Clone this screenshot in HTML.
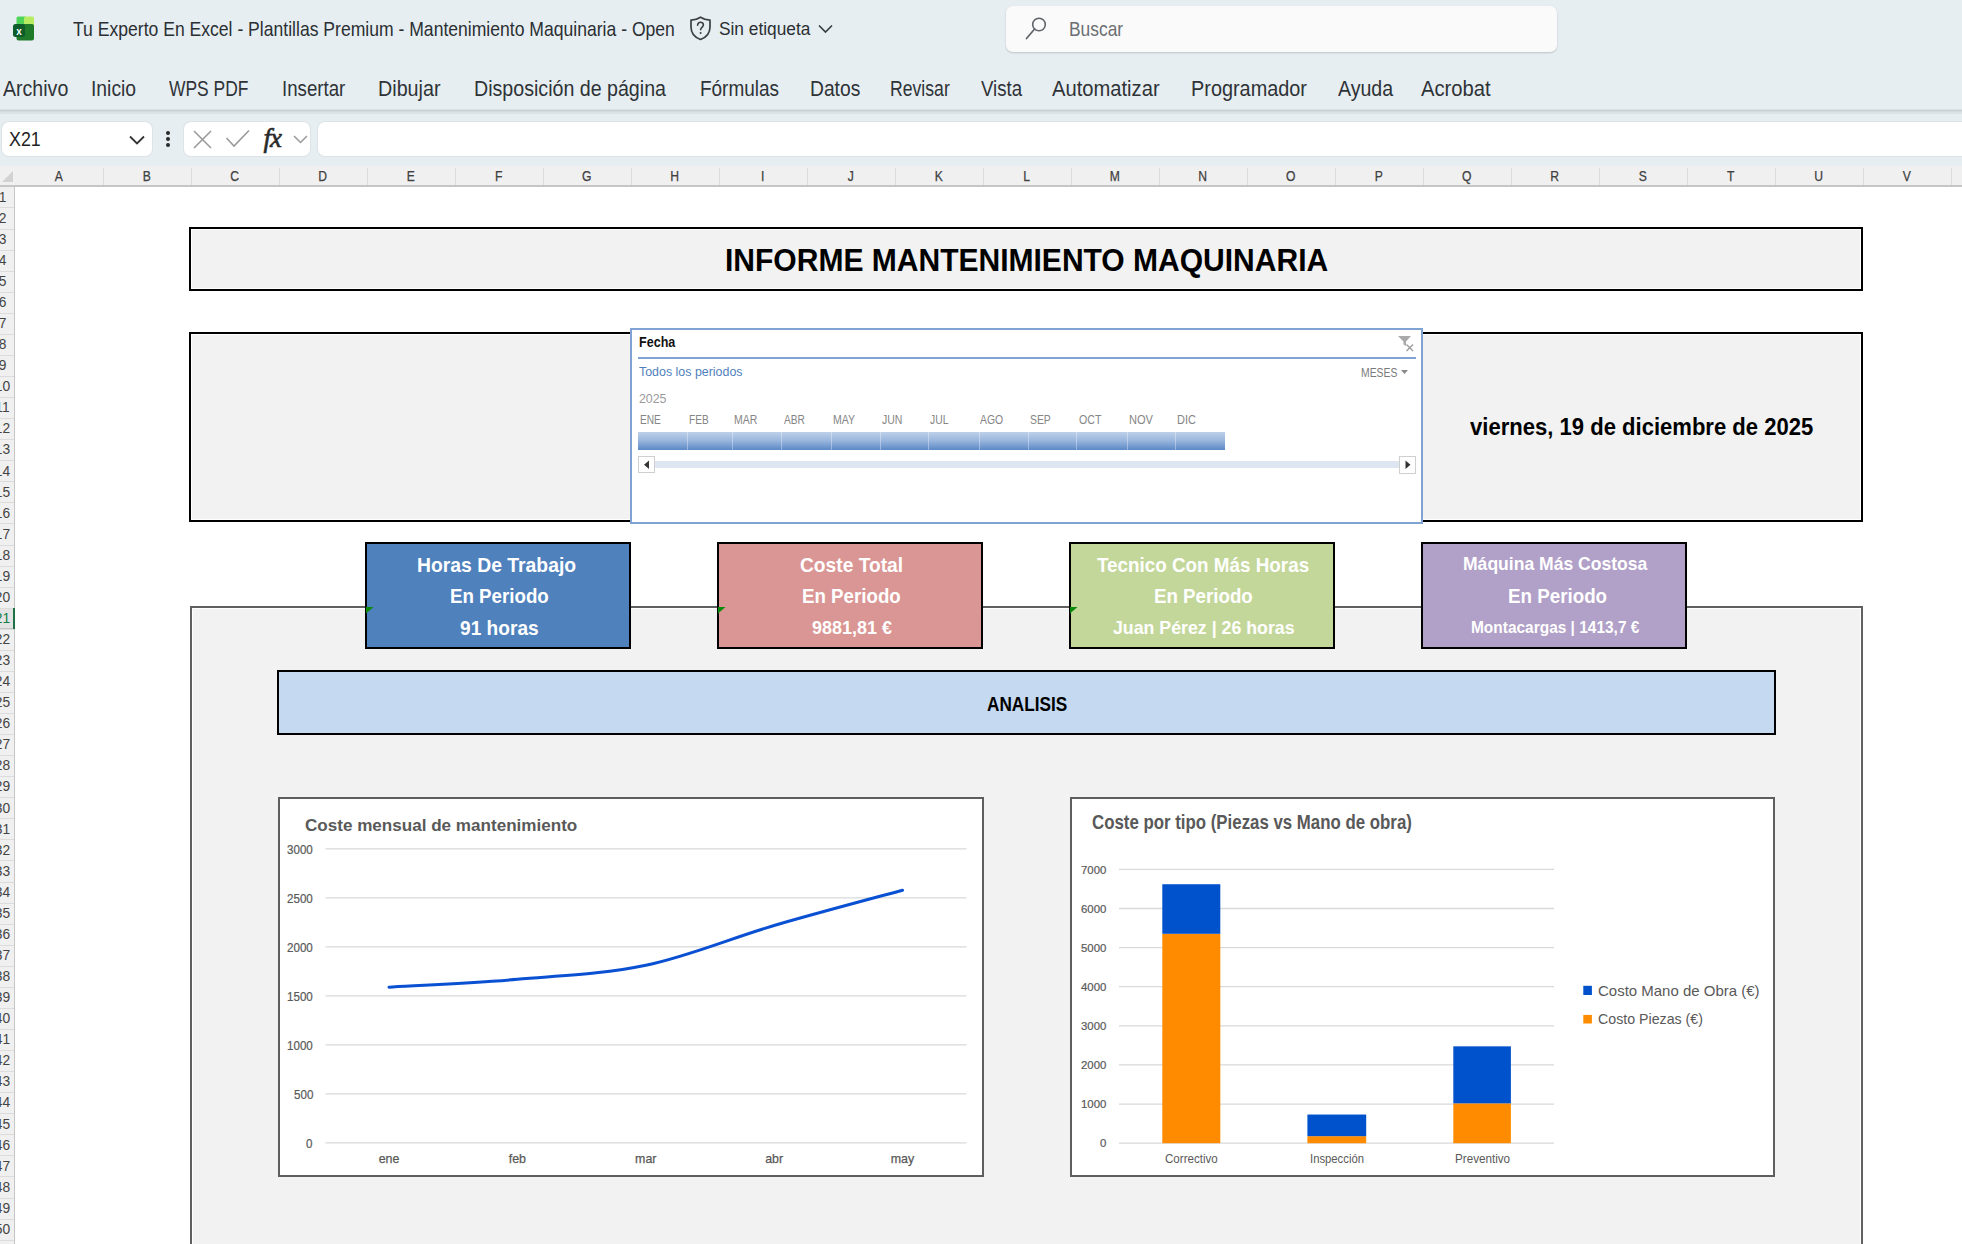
<!DOCTYPE html>
<html><head><meta charset="utf-8">
<style>
*{box-sizing:border-box;margin:0;padding:0}
html,body{width:1962px;height:1244px;overflow:hidden;background:#fff;font-family:"Liberation Sans",sans-serif;position:relative}
.a{position:absolute}
.t{position:absolute;white-space:nowrap;line-height:1;transform-origin:0 0}
</style></head><body>

<div class="a" style="left:0px;top:0px;width:1962px;height:166px;background:#e6eef1;"></div>
<div class="a" style="left:0px;top:109px;width:1962px;height:1px;background:#dae1e4;"></div>
<div class="a" style="left:0px;top:110px;width:1962px;height:1px;background:#c9d1d4;"></div>
<div class="a" style="left:0px;top:111px;width:1962px;height:1px;background:#d3dadd;"></div>
<div class="a" style="left:0px;top:112px;width:1962px;height:2px;background:#dce3e6;"></div>
<svg class="a" style="left:13px;top:16px" width="24" height="25" viewBox="0 0 24 25">
<rect x="3.5" y="0.5" width="10" height="9" rx="1.5" fill="#4fd35a"/>
<rect x="11" y="0.5" width="10" height="9" rx="1.5" fill="#b7ec63"/>
<rect x="11" y="3" width="10" height="6.5" fill="#b7ec63"/>
<rect x="3.5" y="8" width="17.5" height="16.5" rx="2" fill="#1f7a2a"/>
<rect x="0" y="8" width="12" height="13" rx="2.5" fill="#0e5c2a"/>
<text x="6" y="18.5" font-family="Liberation Sans" font-weight="bold" font-size="10" fill="#fff" text-anchor="middle">x</text>
</svg>
<div class="t" style="left:73.40px;top:19.90px;font-size:19.48px;font-weight:normal;color:#2b2f33;transform:scaleX(0.9025);">Tu Experto En Excel - Plantillas Premium - Mantenimiento Maquinaria - Open</div>
<svg class="a" style="left:689px;top:16px" width="23" height="25" viewBox="0 0 23 25">
<path d="M11.5 1.2 C8.5 3.2 5.5 4 2 4.2 V11 C2 17 6 21.5 11.5 23.5 C17 21.5 21 17 21 11 V4.2 C17.5 4 14.5 3.2 11.5 1.2 Z" fill="none" stroke="#3b3f44" stroke-width="1.7" stroke-linejoin="round"/>
<path d="M8.6 9.2 C8.6 7.4 9.9 6.3 11.5 6.3 C13.1 6.3 14.4 7.4 14.4 9 C14.4 11 11.6 11.3 11.6 13.8" fill="none" stroke="#3b3f44" stroke-width="1.6" stroke-linecap="round"/>
<circle cx="11.6" cy="17" r="1" fill="#3b3f44"/>
</svg>
<div class="t" style="left:719.00px;top:21.17px;font-size:17.51px;font-weight:normal;color:#2b2f33;transform:scaleX(0.9878);">Sin etiqueta</div>
<svg class="a" style="left:817px;top:23px" width="17" height="11" viewBox="0 0 17 11"><path d="M2 2.5 L8.5 9 L15 2.5" fill="none" stroke="#3b3f44" stroke-width="1.7"/></svg>
<div class="a" style="left:1006px;top:6px;width:551px;height:46px;background:#fafafa;border-radius:7px;box-shadow:0 1px 2px rgba(0,0,0,0.18);"></div>
<svg class="a" style="left:1024px;top:15px" width="26" height="26" viewBox="0 0 26 26">
<circle cx="15" cy="9.5" r="6.3" fill="none" stroke="#5f6368" stroke-width="1.6"/>
<path d="M10.6 14 L2.5 23.5" stroke="#5f6368" stroke-width="1.7" stroke-linecap="round"/></svg>
<div class="t" style="left:1068.60px;top:19.90px;font-size:19.48px;font-weight:normal;color:#6b6f73;transform:scaleX(0.8926);">Buscar</div>
<div class="t" style="left:2.90px;top:77.53px;font-size:21.22px;font-weight:normal;color:#2f3337;transform:scaleX(0.9227);">Archivo</div>
<div class="t" style="left:91.40px;top:77.53px;font-size:21.22px;font-weight:normal;color:#2f3337;transform:scaleX(0.9106);">Inicio</div>
<div class="t" style="left:169.00px;top:77.53px;font-size:21.22px;font-weight:normal;color:#2f3337;transform:scaleX(0.8223);">WPS PDF</div>
<div class="t" style="left:282.00px;top:77.53px;font-size:21.22px;font-weight:normal;color:#2f3337;transform:scaleX(0.8799);">Insertar</div>
<div class="t" style="left:377.80px;top:77.53px;font-size:21.22px;font-weight:normal;color:#2f3337;transform:scaleX(0.9297);">Dibujar</div>
<div class="t" style="left:474.00px;top:77.53px;font-size:21.22px;font-weight:normal;color:#2f3337;transform:scaleX(0.9246);">Disposición de página</div>
<div class="t" style="left:699.90px;top:77.53px;font-size:21.22px;font-weight:normal;color:#2f3337;transform:scaleX(0.8932);">Fórmulas</div>
<div class="t" style="left:810.20px;top:77.53px;font-size:21.22px;font-weight:normal;color:#2f3337;transform:scaleX(0.9075);">Datos</div>
<div class="t" style="left:889.80px;top:77.53px;font-size:21.22px;font-weight:normal;color:#2f3337;transform:scaleX(0.8313);">Revisar</div>
<div class="t" style="left:980.80px;top:77.53px;font-size:21.22px;font-weight:normal;color:#2f3337;transform:scaleX(0.8801);">Vista</div>
<div class="t" style="left:1052.40px;top:77.53px;font-size:21.22px;font-weight:normal;color:#2f3337;transform:scaleX(0.9504);">Automatizar</div>
<div class="t" style="left:1190.70px;top:77.53px;font-size:21.22px;font-weight:normal;color:#2f3337;transform:scaleX(0.9367);">Programador</div>
<div class="t" style="left:1337.50px;top:77.53px;font-size:21.22px;font-weight:normal;color:#2f3337;transform:scaleX(0.9214);">Ayuda</div>
<div class="t" style="left:1421.20px;top:77.53px;font-size:21.22px;font-weight:normal;color:#2f3337;transform:scaleX(0.9531);">Acrobat</div>
<div class="a" style="left:2px;top:122px;width:150px;height:34px;background:#fff;border-radius:7px;box-shadow:0 0 0 1px #dde3e6;"></div>
<div class="t" style="left:8.60px;top:129.29px;font-size:20.20px;font-weight:normal;color:#1f1f1f;transform:scaleX(0.8848);">X21</div>
<svg class="a" style="left:128px;top:134px" width="18" height="12" viewBox="0 0 18 12"><path d="M2 2.5 L9 9.5 L16 2.5" fill="none" stroke="#333" stroke-width="1.8"/></svg>
<div class="a" style="left:166.2px;top:131px;width:4px;height:4px;border-radius:2px;background:#2a2a2a"></div>
<div class="a" style="left:166.2px;top:137px;width:4px;height:4px;border-radius:2px;background:#2a2a2a"></div>
<div class="a" style="left:166.2px;top:143px;width:4px;height:4px;border-radius:2px;background:#2a2a2a"></div>
<div class="a" style="left:184px;top:122px;width:126px;height:34px;background:#fff;border-radius:7px;box-shadow:0 0 0 1px #dde3e6;"></div>
<svg class="a" style="left:190px;top:127px" width="120" height="26" viewBox="0 0 120 26">
<path d="M4 4 L21 21 M21 4 L4 21" stroke="#9a9a9a" stroke-width="1.6"/>
<path d="M36.5 11 L44 19 L59 3.5" fill="none" stroke="#9a9a9a" stroke-width="1.6"/>
<path d="M104 9 L110.5 15.5 L117 9" fill="none" stroke="#999" stroke-width="1.5"/>
</svg>
<div class="t" style="left:263.5px;top:124.5px;font-family:'Liberation Serif';font-style:italic;font-size:27px;color:#2a2a2a;letter-spacing:-1px;-webkit-text-stroke:0.6px #2a2a2a">fx</div>
<div class="a" style="left:318px;top:122px;width:1644px;height:34px;background:#fff;border-radius:7px 0 0 7px;box-shadow:0 0 0 1px #dde3e6;"></div>
<div class="a" style="left:0px;top:166px;width:1962px;height:20px;background:#f0f0f0;"></div>
<div class="a" style="left:0px;top:185px;width:1962px;height:2px;background:#c6c6c6;"></div>
<div class="t" style="left:20px;top:170.2px;width:88px;text-align:center;font-size:13.8px;color:#404040;transform:scaleX(0.88);-webkit-text-stroke:0.25px #404040">A</div>
<div class="a" style="left:103px;top:168px;width:1px;height:17px;background:#dcdcdc;"></div>
<div class="t" style="left:108px;top:170.2px;width:88px;text-align:center;font-size:13.8px;color:#404040;transform:scaleX(0.88);-webkit-text-stroke:0.25px #404040">B</div>
<div class="a" style="left:191px;top:168px;width:1px;height:17px;background:#dcdcdc;"></div>
<div class="t" style="left:196px;top:170.2px;width:88px;text-align:center;font-size:13.8px;color:#404040;transform:scaleX(0.88);-webkit-text-stroke:0.25px #404040">C</div>
<div class="a" style="left:279px;top:168px;width:1px;height:17px;background:#dcdcdc;"></div>
<div class="t" style="left:284px;top:170.2px;width:88px;text-align:center;font-size:13.8px;color:#404040;transform:scaleX(0.88);-webkit-text-stroke:0.25px #404040">D</div>
<div class="a" style="left:367px;top:168px;width:1px;height:17px;background:#dcdcdc;"></div>
<div class="t" style="left:372px;top:170.2px;width:88px;text-align:center;font-size:13.8px;color:#404040;transform:scaleX(0.88);-webkit-text-stroke:0.25px #404040">E</div>
<div class="a" style="left:455px;top:168px;width:1px;height:17px;background:#dcdcdc;"></div>
<div class="t" style="left:460px;top:170.2px;width:88px;text-align:center;font-size:13.8px;color:#404040;transform:scaleX(0.88);-webkit-text-stroke:0.25px #404040">F</div>
<div class="a" style="left:543px;top:168px;width:1px;height:17px;background:#dcdcdc;"></div>
<div class="t" style="left:548px;top:170.2px;width:88px;text-align:center;font-size:13.8px;color:#404040;transform:scaleX(0.88);-webkit-text-stroke:0.25px #404040">G</div>
<div class="a" style="left:631px;top:168px;width:1px;height:17px;background:#dcdcdc;"></div>
<div class="t" style="left:636px;top:170.2px;width:88px;text-align:center;font-size:13.8px;color:#404040;transform:scaleX(0.88);-webkit-text-stroke:0.25px #404040">H</div>
<div class="a" style="left:719px;top:168px;width:1px;height:17px;background:#dcdcdc;"></div>
<div class="t" style="left:724px;top:170.2px;width:88px;text-align:center;font-size:13.8px;color:#404040;transform:scaleX(0.88);-webkit-text-stroke:0.25px #404040">I</div>
<div class="a" style="left:807px;top:168px;width:1px;height:17px;background:#dcdcdc;"></div>
<div class="t" style="left:812px;top:170.2px;width:88px;text-align:center;font-size:13.8px;color:#404040;transform:scaleX(0.88);-webkit-text-stroke:0.25px #404040">J</div>
<div class="a" style="left:895px;top:168px;width:1px;height:17px;background:#dcdcdc;"></div>
<div class="t" style="left:900px;top:170.2px;width:88px;text-align:center;font-size:13.8px;color:#404040;transform:scaleX(0.88);-webkit-text-stroke:0.25px #404040">K</div>
<div class="a" style="left:983px;top:168px;width:1px;height:17px;background:#dcdcdc;"></div>
<div class="t" style="left:988px;top:170.2px;width:88px;text-align:center;font-size:13.8px;color:#404040;transform:scaleX(0.88);-webkit-text-stroke:0.25px #404040">L</div>
<div class="a" style="left:1071px;top:168px;width:1px;height:17px;background:#dcdcdc;"></div>
<div class="t" style="left:1076px;top:170.2px;width:88px;text-align:center;font-size:13.8px;color:#404040;transform:scaleX(0.88);-webkit-text-stroke:0.25px #404040">M</div>
<div class="a" style="left:1159px;top:168px;width:1px;height:17px;background:#dcdcdc;"></div>
<div class="t" style="left:1164px;top:170.2px;width:88px;text-align:center;font-size:13.8px;color:#404040;transform:scaleX(0.88);-webkit-text-stroke:0.25px #404040">N</div>
<div class="a" style="left:1247px;top:168px;width:1px;height:17px;background:#dcdcdc;"></div>
<div class="t" style="left:1252px;top:170.2px;width:88px;text-align:center;font-size:13.8px;color:#404040;transform:scaleX(0.88);-webkit-text-stroke:0.25px #404040">O</div>
<div class="a" style="left:1335px;top:168px;width:1px;height:17px;background:#dcdcdc;"></div>
<div class="t" style="left:1340px;top:170.2px;width:88px;text-align:center;font-size:13.8px;color:#404040;transform:scaleX(0.88);-webkit-text-stroke:0.25px #404040">P</div>
<div class="a" style="left:1423px;top:168px;width:1px;height:17px;background:#dcdcdc;"></div>
<div class="t" style="left:1428px;top:170.2px;width:88px;text-align:center;font-size:13.8px;color:#404040;transform:scaleX(0.88);-webkit-text-stroke:0.25px #404040">Q</div>
<div class="a" style="left:1511px;top:168px;width:1px;height:17px;background:#dcdcdc;"></div>
<div class="t" style="left:1516px;top:170.2px;width:88px;text-align:center;font-size:13.8px;color:#404040;transform:scaleX(0.88);-webkit-text-stroke:0.25px #404040">R</div>
<div class="a" style="left:1599px;top:168px;width:1px;height:17px;background:#dcdcdc;"></div>
<div class="t" style="left:1604px;top:170.2px;width:88px;text-align:center;font-size:13.8px;color:#404040;transform:scaleX(0.88);-webkit-text-stroke:0.25px #404040">S</div>
<div class="a" style="left:1687px;top:168px;width:1px;height:17px;background:#dcdcdc;"></div>
<div class="t" style="left:1692px;top:170.2px;width:88px;text-align:center;font-size:13.8px;color:#404040;transform:scaleX(0.88);-webkit-text-stroke:0.25px #404040">T</div>
<div class="a" style="left:1775px;top:168px;width:1px;height:17px;background:#dcdcdc;"></div>
<div class="t" style="left:1780px;top:170.2px;width:88px;text-align:center;font-size:13.8px;color:#404040;transform:scaleX(0.88);-webkit-text-stroke:0.25px #404040">U</div>
<div class="a" style="left:1863px;top:168px;width:1px;height:17px;background:#dcdcdc;"></div>
<div class="t" style="left:1868px;top:170.2px;width:88px;text-align:center;font-size:13.8px;color:#404040;transform:scaleX(0.88);-webkit-text-stroke:0.25px #404040">V</div>
<div class="a" style="left:1951px;top:168px;width:1px;height:17px;background:#dcdcdc;"></div>
<svg class="a" style="left:2px;top:171px" width="11" height="11"><path d="M11 0 L11 11 L0 11 Z" fill="#d2d2d2"/></svg>
<div class="a" style="left:0px;top:187px;width:14px;height:1057px;background:#f0f0f0;"></div>
<div class="a" style="left:14px;top:187px;width:1px;height:1057px;background:#c6c6c6;"></div>
<div class="a" style="left:0px;top:609px;width:13px;height:20px;background:#e3e3e3;"></div>
<div class="a" style="left:0px;top:628px;width:13px;height:2px;background:#c4c4c4;"></div>
<div class="a" style="left:0px;top:207px;width:14px;height:1px;background:#dcdcdc;"></div>
<div class="t" style="left:-18px;width:41px;text-align:center;top:190.6px;font-size:13.8px;color:#444">1</div>
<div class="a" style="left:0px;top:229px;width:14px;height:1px;background:#dcdcdc;"></div>
<div class="t" style="left:-18px;width:41px;text-align:center;top:211.7px;font-size:13.8px;color:#444">2</div>
<div class="a" style="left:0px;top:250px;width:14px;height:1px;background:#dcdcdc;"></div>
<div class="t" style="left:-18px;width:41px;text-align:center;top:232.7px;font-size:13.8px;color:#444">3</div>
<div class="a" style="left:0px;top:271px;width:14px;height:1px;background:#dcdcdc;"></div>
<div class="t" style="left:-18px;width:41px;text-align:center;top:253.8px;font-size:13.8px;color:#444">4</div>
<div class="a" style="left:0px;top:292px;width:14px;height:1px;background:#dcdcdc;"></div>
<div class="t" style="left:-18px;width:41px;text-align:center;top:274.9px;font-size:13.8px;color:#444">5</div>
<div class="a" style="left:0px;top:313px;width:14px;height:1px;background:#dcdcdc;"></div>
<div class="t" style="left:-18px;width:41px;text-align:center;top:295.9px;font-size:13.8px;color:#444">6</div>
<div class="a" style="left:0px;top:334px;width:14px;height:1px;background:#dcdcdc;"></div>
<div class="t" style="left:-18px;width:41px;text-align:center;top:317.0px;font-size:13.8px;color:#444">7</div>
<div class="a" style="left:0px;top:355px;width:14px;height:1px;background:#dcdcdc;"></div>
<div class="t" style="left:-18px;width:41px;text-align:center;top:338.1px;font-size:13.8px;color:#444">8</div>
<div class="a" style="left:0px;top:376px;width:14px;height:1px;background:#dcdcdc;"></div>
<div class="t" style="left:-18px;width:41px;text-align:center;top:359.1px;font-size:13.8px;color:#444">9</div>
<div class="a" style="left:0px;top:397px;width:14px;height:1px;background:#dcdcdc;"></div>
<div class="t" style="left:-18px;width:41px;text-align:center;top:380.2px;font-size:13.8px;color:#444">10</div>
<div class="a" style="left:0px;top:418px;width:14px;height:1px;background:#dcdcdc;"></div>
<div class="t" style="left:-18px;width:41px;text-align:center;top:401.3px;font-size:13.8px;color:#444">11</div>
<div class="a" style="left:0px;top:439px;width:14px;height:1px;background:#dcdcdc;"></div>
<div class="t" style="left:-18px;width:41px;text-align:center;top:422.3px;font-size:13.8px;color:#444">12</div>
<div class="a" style="left:0px;top:460px;width:14px;height:1px;background:#dcdcdc;"></div>
<div class="t" style="left:-18px;width:41px;text-align:center;top:443.4px;font-size:13.8px;color:#444">13</div>
<div class="a" style="left:0px;top:481px;width:14px;height:1px;background:#dcdcdc;"></div>
<div class="t" style="left:-18px;width:41px;text-align:center;top:464.5px;font-size:13.8px;color:#444">14</div>
<div class="a" style="left:0px;top:502px;width:14px;height:1px;background:#dcdcdc;"></div>
<div class="t" style="left:-18px;width:41px;text-align:center;top:485.5px;font-size:13.8px;color:#444">15</div>
<div class="a" style="left:0px;top:523px;width:14px;height:1px;background:#dcdcdc;"></div>
<div class="t" style="left:-18px;width:41px;text-align:center;top:506.6px;font-size:13.8px;color:#444">16</div>
<div class="a" style="left:0px;top:545px;width:14px;height:1px;background:#dcdcdc;"></div>
<div class="t" style="left:-18px;width:41px;text-align:center;top:527.7px;font-size:13.8px;color:#444">17</div>
<div class="a" style="left:0px;top:566px;width:14px;height:1px;background:#dcdcdc;"></div>
<div class="t" style="left:-18px;width:41px;text-align:center;top:548.7px;font-size:13.8px;color:#444">18</div>
<div class="a" style="left:0px;top:587px;width:14px;height:1px;background:#dcdcdc;"></div>
<div class="t" style="left:-18px;width:41px;text-align:center;top:569.8px;font-size:13.8px;color:#444">19</div>
<div class="a" style="left:0px;top:608px;width:14px;height:1px;background:#dcdcdc;"></div>
<div class="t" style="left:-18px;width:41px;text-align:center;top:590.8px;font-size:13.8px;color:#444">20</div>
<div class="a" style="left:0px;top:629px;width:14px;height:1px;background:#dcdcdc;"></div>
<div class="t" style="left:-18px;width:41px;text-align:center;top:611.9px;font-size:13.8px;color:#107c41">21</div>
<div class="a" style="left:0px;top:650px;width:14px;height:1px;background:#dcdcdc;"></div>
<div class="t" style="left:-18px;width:41px;text-align:center;top:633.0px;font-size:13.8px;color:#444">22</div>
<div class="a" style="left:0px;top:671px;width:14px;height:1px;background:#dcdcdc;"></div>
<div class="t" style="left:-18px;width:41px;text-align:center;top:654.0px;font-size:13.8px;color:#444">23</div>
<div class="a" style="left:0px;top:692px;width:14px;height:1px;background:#dcdcdc;"></div>
<div class="t" style="left:-18px;width:41px;text-align:center;top:675.1px;font-size:13.8px;color:#444">24</div>
<div class="a" style="left:0px;top:713px;width:14px;height:1px;background:#dcdcdc;"></div>
<div class="t" style="left:-18px;width:41px;text-align:center;top:696.2px;font-size:13.8px;color:#444">25</div>
<div class="a" style="left:0px;top:734px;width:14px;height:1px;background:#dcdcdc;"></div>
<div class="t" style="left:-18px;width:41px;text-align:center;top:717.2px;font-size:13.8px;color:#444">26</div>
<div class="a" style="left:0px;top:755px;width:14px;height:1px;background:#dcdcdc;"></div>
<div class="t" style="left:-18px;width:41px;text-align:center;top:738.3px;font-size:13.8px;color:#444">27</div>
<div class="a" style="left:0px;top:776px;width:14px;height:1px;background:#dcdcdc;"></div>
<div class="t" style="left:-18px;width:41px;text-align:center;top:759.4px;font-size:13.8px;color:#444">28</div>
<div class="a" style="left:0px;top:797px;width:14px;height:1px;background:#dcdcdc;"></div>
<div class="t" style="left:-18px;width:41px;text-align:center;top:780.4px;font-size:13.8px;color:#444">29</div>
<div class="a" style="left:0px;top:818px;width:14px;height:1px;background:#dcdcdc;"></div>
<div class="t" style="left:-18px;width:41px;text-align:center;top:801.5px;font-size:13.8px;color:#444">30</div>
<div class="a" style="left:0px;top:839px;width:14px;height:1px;background:#dcdcdc;"></div>
<div class="t" style="left:-18px;width:41px;text-align:center;top:822.6px;font-size:13.8px;color:#444">31</div>
<div class="a" style="left:0px;top:860px;width:14px;height:1px;background:#dcdcdc;"></div>
<div class="t" style="left:-18px;width:41px;text-align:center;top:843.6px;font-size:13.8px;color:#444">32</div>
<div class="a" style="left:0px;top:882px;width:14px;height:1px;background:#dcdcdc;"></div>
<div class="t" style="left:-18px;width:41px;text-align:center;top:864.7px;font-size:13.8px;color:#444">33</div>
<div class="a" style="left:0px;top:903px;width:14px;height:1px;background:#dcdcdc;"></div>
<div class="t" style="left:-18px;width:41px;text-align:center;top:885.8px;font-size:13.8px;color:#444">34</div>
<div class="a" style="left:0px;top:924px;width:14px;height:1px;background:#dcdcdc;"></div>
<div class="t" style="left:-18px;width:41px;text-align:center;top:906.8px;font-size:13.8px;color:#444">35</div>
<div class="a" style="left:0px;top:945px;width:14px;height:1px;background:#dcdcdc;"></div>
<div class="t" style="left:-18px;width:41px;text-align:center;top:927.9px;font-size:13.8px;color:#444">36</div>
<div class="a" style="left:0px;top:966px;width:14px;height:1px;background:#dcdcdc;"></div>
<div class="t" style="left:-18px;width:41px;text-align:center;top:949.0px;font-size:13.8px;color:#444">37</div>
<div class="a" style="left:0px;top:987px;width:14px;height:1px;background:#dcdcdc;"></div>
<div class="t" style="left:-18px;width:41px;text-align:center;top:970.0px;font-size:13.8px;color:#444">38</div>
<div class="a" style="left:0px;top:1008px;width:14px;height:1px;background:#dcdcdc;"></div>
<div class="t" style="left:-18px;width:41px;text-align:center;top:991.1px;font-size:13.8px;color:#444">39</div>
<div class="a" style="left:0px;top:1029px;width:14px;height:1px;background:#dcdcdc;"></div>
<div class="t" style="left:-18px;width:41px;text-align:center;top:1012.1px;font-size:13.8px;color:#444">40</div>
<div class="a" style="left:0px;top:1050px;width:14px;height:1px;background:#dcdcdc;"></div>
<div class="t" style="left:-18px;width:41px;text-align:center;top:1033.2px;font-size:13.8px;color:#444">41</div>
<div class="a" style="left:0px;top:1071px;width:14px;height:1px;background:#dcdcdc;"></div>
<div class="t" style="left:-18px;width:41px;text-align:center;top:1054.3px;font-size:13.8px;color:#444">42</div>
<div class="a" style="left:0px;top:1092px;width:14px;height:1px;background:#dcdcdc;"></div>
<div class="t" style="left:-18px;width:41px;text-align:center;top:1075.3px;font-size:13.8px;color:#444">43</div>
<div class="a" style="left:0px;top:1113px;width:14px;height:1px;background:#dcdcdc;"></div>
<div class="t" style="left:-18px;width:41px;text-align:center;top:1096.4px;font-size:13.8px;color:#444">44</div>
<div class="a" style="left:0px;top:1134px;width:14px;height:1px;background:#dcdcdc;"></div>
<div class="t" style="left:-18px;width:41px;text-align:center;top:1117.5px;font-size:13.8px;color:#444">45</div>
<div class="a" style="left:0px;top:1155px;width:14px;height:1px;background:#dcdcdc;"></div>
<div class="t" style="left:-18px;width:41px;text-align:center;top:1138.5px;font-size:13.8px;color:#444">46</div>
<div class="a" style="left:0px;top:1176px;width:14px;height:1px;background:#dcdcdc;"></div>
<div class="t" style="left:-18px;width:41px;text-align:center;top:1159.6px;font-size:13.8px;color:#444">47</div>
<div class="a" style="left:0px;top:1198px;width:14px;height:1px;background:#dcdcdc;"></div>
<div class="t" style="left:-18px;width:41px;text-align:center;top:1180.7px;font-size:13.8px;color:#444">48</div>
<div class="a" style="left:0px;top:1219px;width:14px;height:1px;background:#dcdcdc;"></div>
<div class="t" style="left:-18px;width:41px;text-align:center;top:1201.7px;font-size:13.8px;color:#444">49</div>
<div class="a" style="left:0px;top:1240px;width:14px;height:1px;background:#dcdcdc;"></div>
<div class="t" style="left:-18px;width:41px;text-align:center;top:1222.8px;font-size:13.8px;color:#444">50</div>
<div class="a" style="left:13px;top:608px;width:2px;height:21px;background:#1e7145;"></div>
<div class="a" style="left:189px;top:227px;width:1674px;height:64px;background:#f2f2f2;border:2px solid #000;box-shadow:inset 0 0 0 1px #fff;"></div>
<div class="t" style="left:725.20px;top:244.95px;font-size:31.10px;font-weight:bold;color:#000;transform:scaleX(0.9655);">INFORME MANTENIMIENTO MAQUINARIA</div>
<div class="a" style="left:189px;top:332px;width:1674px;height:190px;background:#f2f2f2;border:2px solid #000;box-shadow:inset 0 0 0 1px #fff;"></div>
<div class="t" style="left:1470.40px;top:414.89px;font-size:24.56px;font-weight:bold;color:#000;transform:scaleX(0.8985);">viernes, 19 de diciembre de 2025</div>
<div class="a" style="left:190px;top:606px;width:1673px;height:654px;background:#f2f2f2;border:2px solid #606060;box-shadow:inset 0 0 0 1px #fff;"></div>
<div class="a" style="left:630px;top:328px;width:793px;height:196px;background:#fff;border:2px solid #7fa3d3;"></div>
<div class="t" style="left:638.90px;top:335.36px;font-size:14.10px;font-weight:bold;color:#111;transform:scaleX(0.8912);">Fecha</div>
<div class="a" style="left:638px;top:357px;width:778px;height:2px;background:#7fa3d3;"></div>
<svg class="a" style="left:1397px;top:335px" width="18" height="17" viewBox="0 0 18 17">
<path d="M1 1 H14 L9 6.5 V11 L6.5 9.5 V6.5 Z" fill="#a9a9a9"/>
<path d="M9.5 9.5 L16 16 M16 9.5 L9.5 16" stroke="#9a9a9a" stroke-width="1.3"/></svg>
<div class="t" style="left:638.80px;top:365.40px;font-size:13.23px;font-weight:normal;color:#4f7fbd;transform:scaleX(0.9394);">Todos los periodos</div>
<div class="t" style="left:1360.60px;top:365.63px;font-size:13.66px;font-weight:normal;color:#7a7a7a;transform:scaleX(0.7610);">MESES</div>
<svg class="a" style="left:1401px;top:370px" width="8" height="5"><path d="M0 0 H7 L3.5 4 Z" fill="#8a8a8a"/></svg>
<div class="t" style="left:639.40px;top:391.86px;font-size:13.04px;font-weight:normal;color:#9a9a9a;transform:scaleX(0.9480);">2025</div>
<div class="t" style="left:639.80px;top:413.89px;font-size:12.65px;font-weight:normal;color:#858585;transform:scaleX(0.8039);">ENE</div>
<div class="t" style="left:688.80px;top:413.89px;font-size:12.65px;font-weight:normal;color:#858585;transform:scaleX(0.8010);">FEB</div>
<div class="t" style="left:733.70px;top:413.89px;font-size:12.65px;font-weight:normal;color:#858585;transform:scaleX(0.8257);">MAR</div>
<div class="t" style="left:783.70px;top:413.89px;font-size:12.65px;font-weight:normal;color:#858585;transform:scaleX(0.8039);">ABR</div>
<div class="t" style="left:832.70px;top:413.89px;font-size:12.65px;font-weight:normal;color:#858585;transform:scaleX(0.8312);">MAY</div>
<div class="t" style="left:882.40px;top:413.89px;font-size:12.65px;font-weight:normal;color:#858585;transform:scaleX(0.8299);">JUN</div>
<div class="t" style="left:929.90px;top:413.89px;font-size:12.65px;font-weight:normal;color:#858585;transform:scaleX(0.8184);">JUL</div>
<div class="t" style="left:980.30px;top:413.89px;font-size:12.65px;font-weight:normal;color:#858585;transform:scaleX(0.8253);">AGO</div>
<div class="t" style="left:1030.30px;top:413.89px;font-size:12.65px;font-weight:normal;color:#858585;transform:scaleX(0.8220);">SEP</div>
<div class="t" style="left:1078.50px;top:413.89px;font-size:12.65px;font-weight:normal;color:#858585;transform:scaleX(0.8391);">OCT</div>
<div class="t" style="left:1128.50px;top:413.89px;font-size:12.65px;font-weight:normal;color:#858585;transform:scaleX(0.8758);">NOV</div>
<div class="t" style="left:1176.70px;top:413.89px;font-size:12.65px;font-weight:normal;color:#858585;transform:scaleX(0.8680);">DIC</div>
<div class="a" style="left:638px;top:432px;width:587px;height:18px;background:;background:linear-gradient(#bdd0e8,#9cb8de 45%,#5b89c6);"></div>
<div class="a" style="left:687px;top:432px;width:1px;height:18px;background:rgba(255,255,255,0.35)"></div>
<div class="a" style="left:732px;top:432px;width:1px;height:18px;background:rgba(255,255,255,0.35)"></div>
<div class="a" style="left:781px;top:432px;width:1px;height:18px;background:rgba(255,255,255,0.35)"></div>
<div class="a" style="left:831px;top:432px;width:1px;height:18px;background:rgba(255,255,255,0.35)"></div>
<div class="a" style="left:880px;top:432px;width:1px;height:18px;background:rgba(255,255,255,0.35)"></div>
<div class="a" style="left:928px;top:432px;width:1px;height:18px;background:rgba(255,255,255,0.35)"></div>
<div class="a" style="left:979px;top:432px;width:1px;height:18px;background:rgba(255,255,255,0.35)"></div>
<div class="a" style="left:1028px;top:432px;width:1px;height:18px;background:rgba(255,255,255,0.35)"></div>
<div class="a" style="left:1076px;top:432px;width:1px;height:18px;background:rgba(255,255,255,0.35)"></div>
<div class="a" style="left:1127px;top:432px;width:1px;height:18px;background:rgba(255,255,255,0.35)"></div>
<div class="a" style="left:1175px;top:432px;width:1px;height:18px;background:rgba(255,255,255,0.35)"></div>
<div class="a" style="left:654px;top:461px;width:746px;height:7px;background:#dde6f1;"></div>
<div class="a" style="left:638px;top:456px;width:17px;height:17px;background:#fff;border:1px solid #cfcfcf;"></div>
<svg class="a" style="left:642px;top:460px" width="9" height="10"><path d="M7 0.5 V9 L2 4.75 Z" fill="#333"/></svg>
<div class="a" style="left:1399px;top:456px;width:17px;height:18px;background:#fff;border:1px solid #cfcfcf;"></div>
<svg class="a" style="left:1404px;top:460px" width="9" height="10"><path d="M1.5 0.5 V9 L6.5 4.75 Z" fill="#333"/></svg>
<div class="a" style="left:365px;top:542px;width:266px;height:107px;background:#4f81bd;border:2px solid #000;"></div>
<div class="t" style="left:416.70px;top:554.15px;font-size:21.08px;font-weight:bold;color:#fff;transform:scaleX(0.9178);">Horas De Trabajo</div>
<div class="t" style="left:450.10px;top:586.31px;font-size:20.06px;font-weight:bold;color:#fff;transform:scaleX(0.9332);">En Periodo</div>
<div class="t" style="left:459.60px;top:617.85px;font-size:20.48px;font-weight:bold;color:#fff;transform:scaleX(0.9343);">91 horas</div>
<svg class="a" style="left:366px;top:607px" width="8" height="7"><path d="M0 0 H7.5 L0 6.5 Z" fill="#0a8a0a"/></svg>
<div class="a" style="left:717px;top:542px;width:266px;height:107px;background:#da9694;border:2px solid #000;"></div>
<div class="t" style="left:800.00px;top:554.65px;font-size:20.48px;font-weight:bold;color:#fff;transform:scaleX(0.9373);">Coste Total</div>
<div class="t" style="left:802.10px;top:586.31px;font-size:20.06px;font-weight:bold;color:#fff;transform:scaleX(0.9332);">En Periodo</div>
<div class="t" style="left:811.60px;top:618.83px;font-size:18.50px;font-weight:bold;color:#fff;transform:scaleX(0.9706);">9881,81 €</div>
<svg class="a" style="left:718px;top:607px" width="8" height="7"><path d="M0 0 H7.5 L0 6.5 Z" fill="#0a8a0a"/></svg>
<div class="a" style="left:1069px;top:542px;width:266px;height:107px;background:#c4d79b;border:2px solid #000;"></div>
<div class="t" style="left:1096.80px;top:554.15px;font-size:21.08px;font-weight:bold;color:#fff;transform:scaleX(0.8936);">Tecnico Con Más Horas</div>
<div class="t" style="left:1154.10px;top:586.31px;font-size:20.06px;font-weight:bold;color:#fff;transform:scaleX(0.9332);">En Periodo</div>
<div class="t" style="left:1112.70px;top:618.60px;font-size:18.77px;font-weight:bold;color:#fff;transform:scaleX(0.9459);">Juan Pérez | 26 horas</div>
<svg class="a" style="left:1070px;top:607px" width="8" height="7"><path d="M0 0 H7.5 L0 6.5 Z" fill="#0a8a0a"/></svg>
<div class="a" style="left:1421px;top:542px;width:266px;height:107px;background:#b1a0c7;border:2px solid #000;"></div>
<div class="t" style="left:1463.30px;top:555.33px;font-size:18.02px;font-weight:bold;color:#fff;transform:scaleX(0.9741);">Máquina Más Costosa</div>
<div class="t" style="left:1508.00px;top:586.31px;font-size:20.06px;font-weight:bold;color:#fff;transform:scaleX(0.9361);">En Periodo</div>
<div class="t" style="left:1470.60px;top:619.52px;font-size:16.86px;font-weight:bold;color:#fff;transform:scaleX(0.9166);">Montacargas | 1413,7 €</div>
<div class="a" style="left:277px;top:670px;width:1499px;height:65px;background:#c5d9f1;border:2px solid #000;"></div>
<div class="t" style="left:986.80px;top:693.70px;font-size:20.78px;font-weight:bold;color:#000;transform:scaleX(0.8278);">ANALISIS</div>
<div class="a" style="left:278px;top:797px;width:706px;height:380px;background:#fff;border:2px solid #5e5e5e;"></div>
<div class="t" style="left:304.50px;top:817.09px;font-size:17.37px;font-weight:bold;color:#595959;transform:scaleX(0.9835);">Coste mensual de mantenimiento</div>
<div class="a" style="left:1070px;top:797px;width:705px;height:380px;background:#fff;border:2px solid #5e5e5e;"></div>
<svg class="a" style="left:0;top:0" width="1962" height="1244">
<line x1="325.5" x2="966.5" y1="1142.80" y2="1142.80" stroke="#d9d9d9" stroke-width="1.3"/>
<line x1="325.5" x2="966.5" y1="1093.80" y2="1093.80" stroke="#d9d9d9" stroke-width="1.3"/>
<line x1="325.5" x2="966.5" y1="1044.80" y2="1044.80" stroke="#d9d9d9" stroke-width="1.3"/>
<line x1="325.5" x2="966.5" y1="995.80" y2="995.80" stroke="#d9d9d9" stroke-width="1.3"/>
<line x1="325.5" x2="966.5" y1="946.80" y2="946.80" stroke="#d9d9d9" stroke-width="1.3"/>
<line x1="325.5" x2="966.5" y1="897.80" y2="897.80" stroke="#d9d9d9" stroke-width="1.3"/>
<line x1="325.5" x2="966.5" y1="848.80" y2="848.80" stroke="#d9d9d9" stroke-width="1.3"/>
<path d="M389,987.2 C410.40,985.88 474.60,982.95 517.4,979.3 C560.20,975.65 603.02,974.27 645.8,965.3 C688.58,956.33 731.32,938.02 774.1,925.5 C816.88,912.98 881.10,896.08 902.5,890.2" fill="none" stroke="#0a50d2" stroke-width="3" stroke-linecap="round"/>
<line x1="1119" x2="1554" y1="1143.20" y2="1143.20" stroke="#d9d9d9" stroke-width="1.3"/>
<line x1="1119" x2="1554" y1="1104.08" y2="1104.08" stroke="#d9d9d9" stroke-width="1.3"/>
<line x1="1119" x2="1554" y1="1064.96" y2="1064.96" stroke="#d9d9d9" stroke-width="1.3"/>
<line x1="1119" x2="1554" y1="1025.84" y2="1025.84" stroke="#d9d9d9" stroke-width="1.3"/>
<line x1="1119" x2="1554" y1="986.72" y2="986.72" stroke="#d9d9d9" stroke-width="1.3"/>
<line x1="1119" x2="1554" y1="947.60" y2="947.60" stroke="#d9d9d9" stroke-width="1.3"/>
<line x1="1119" x2="1554" y1="908.48" y2="908.48" stroke="#d9d9d9" stroke-width="1.3"/>
<line x1="1119" x2="1554" y1="869.36" y2="869.36" stroke="#d9d9d9" stroke-width="1.3"/>
<rect x="1162.3" y="933.79" width="58.00" height="209.41" fill="#ff8c00"/>
<rect x="1162.3" y="884.23" width="58.00" height="49.57" fill="#0052cc"/>
<rect x="1307.4" y="1136.16" width="58.80" height="7.04" fill="#ff8c00"/>
<rect x="1307.4" y="1114.53" width="58.80" height="21.63" fill="#0052cc"/>
<rect x="1453.3" y="1103.34" width="57.60" height="39.86" fill="#ff8c00"/>
<rect x="1453.3" y="1046.34" width="57.60" height="57.00" fill="#0052cc"/>
<rect x="1583.3" y="985.8" width="8.6" height="9.2" fill="#0052cc"/>
<rect x="1583.3" y="1014.9" width="8.6" height="8.6" fill="#ff8c00"/>
</svg>
<div class="t" style="left:1091.60px;top:812.59px;font-size:19.49px;font-weight:bold;color:#595959;transform:scaleX(0.8639);">Coste por tipo (Piezas vs Mano de obra)</div>
<div class="t" style="left:306.45px;top:1137.91px;font-size:12.15px;font-weight:normal;color:#595959;transform:scaleX(0.9549);-webkit-text-stroke:0.2px #595959;">0</div>
<div class="t" style="left:293.55px;top:1088.91px;font-size:12.15px;font-weight:normal;color:#595959;transform:scaleX(0.9549);-webkit-text-stroke:0.2px #595959;">500</div>
<div class="t" style="left:287.09px;top:1039.91px;font-size:12.15px;font-weight:normal;color:#595959;transform:scaleX(0.9549);-webkit-text-stroke:0.2px #595959;">1000</div>
<div class="t" style="left:287.09px;top:990.91px;font-size:12.15px;font-weight:normal;color:#595959;transform:scaleX(0.9549);-webkit-text-stroke:0.2px #595959;">1500</div>
<div class="t" style="left:287.09px;top:941.91px;font-size:12.15px;font-weight:normal;color:#595959;transform:scaleX(0.9549);-webkit-text-stroke:0.2px #595959;">2000</div>
<div class="t" style="left:287.09px;top:892.91px;font-size:12.15px;font-weight:normal;color:#595959;transform:scaleX(0.9549);-webkit-text-stroke:0.2px #595959;">2500</div>
<div class="t" style="left:287.09px;top:843.91px;font-size:12.15px;font-weight:normal;color:#595959;transform:scaleX(0.9549);-webkit-text-stroke:0.2px #595959;">3000</div>
<div class="t" style="left:378.66px;top:1153.30px;font-size:12.4px;color:#595959;-webkit-text-stroke:0.25px #595959">ene</div>
<div class="t" style="left:508.78px;top:1153.30px;font-size:12.4px;color:#595959;-webkit-text-stroke:0.25px #595959">feb</div>
<div class="t" style="left:635.12px;top:1153.30px;font-size:12.4px;color:#595959;-webkit-text-stroke:0.25px #595959">mar</div>
<div class="t" style="left:765.14px;top:1153.30px;font-size:12.4px;color:#595959;-webkit-text-stroke:0.25px #595959">abr</div>
<div class="t" style="left:890.79px;top:1153.30px;font-size:12.4px;color:#595959;-webkit-text-stroke:0.25px #595959">may</div>
<div class="t" style="left:1100.46px;top:1137.35px;font-size:11.63px;font-weight:normal;color:#595959;transform:scaleX(0.9800);-webkit-text-stroke:0.2px #595959;">0</div>
<div class="t" style="left:1081.45px;top:1098.23px;font-size:11.63px;font-weight:normal;color:#595959;transform:scaleX(0.9800);-webkit-text-stroke:0.2px #595959;">1000</div>
<div class="t" style="left:1081.45px;top:1059.11px;font-size:11.63px;font-weight:normal;color:#595959;transform:scaleX(0.9800);-webkit-text-stroke:0.2px #595959;">2000</div>
<div class="t" style="left:1081.45px;top:1019.99px;font-size:11.63px;font-weight:normal;color:#595959;transform:scaleX(0.9800);-webkit-text-stroke:0.2px #595959;">3000</div>
<div class="t" style="left:1081.45px;top:980.87px;font-size:11.63px;font-weight:normal;color:#595959;transform:scaleX(0.9800);-webkit-text-stroke:0.2px #595959;">4000</div>
<div class="t" style="left:1081.45px;top:941.75px;font-size:11.63px;font-weight:normal;color:#595959;transform:scaleX(0.9800);-webkit-text-stroke:0.2px #595959;">5000</div>
<div class="t" style="left:1081.45px;top:902.63px;font-size:11.63px;font-weight:normal;color:#595959;transform:scaleX(0.9800);-webkit-text-stroke:0.2px #595959;">6000</div>
<div class="t" style="left:1081.45px;top:863.51px;font-size:11.63px;font-weight:normal;color:#595959;transform:scaleX(0.9800);-webkit-text-stroke:0.2px #595959;">7000</div>
<div class="t" style="left:1165.30px;top:1153.27px;font-size:12.43px;font-weight:normal;color:#5a5a5a;transform:scaleX(0.9322);">Correctivo</div>
<div class="t" style="left:1310.00px;top:1153.27px;font-size:12.43px;font-weight:normal;color:#5a5a5a;transform:scaleX(0.9087);">Inspección</div>
<div class="t" style="left:1455.10px;top:1153.27px;font-size:12.43px;font-weight:normal;color:#5a5a5a;transform:scaleX(0.9382);">Preventivo</div>
<div class="t" style="left:1597.50px;top:982.70px;font-size:15.11px;font-weight:normal;color:#595959;transform:scaleX(0.9916);">Costo Mano de Obra (€)</div>
<div class="t" style="left:1597.50px;top:1010.70px;font-size:15.11px;font-weight:normal;color:#595959;transform:scaleX(0.9399);">Costo Piezas (€)</div>
</body></html>
